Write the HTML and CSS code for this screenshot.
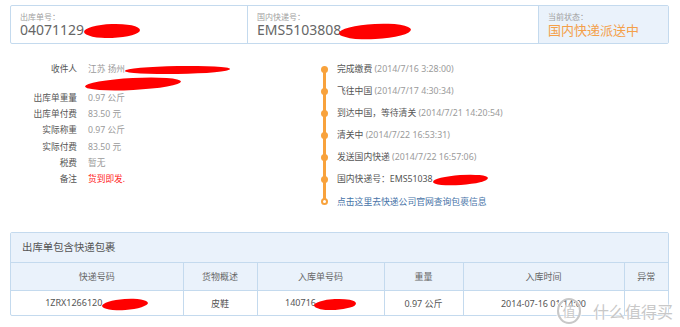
FILE: index.html
```html
<!DOCTYPE html>
<html lang="zh-CN">
<head>
    <meta charset="UTF-8">
    <title>出库单详情</title>
    <link rel="stylesheet" href="styles.css">
</head>
<body>
<div class="page">

    <!-- summary bar -->
    <div class="summary">
        <div class="cell cell-order">
            <div class="cell-label">出库单号：</div>
            <div class="cell-value">04071129<span class="scribble scribble-order"></span></div>
        </div>
        <div class="cell cell-express">
            <div class="cell-label">国内快递号：</div>
            <div class="cell-value">EMS5103808<span class="scribble scribble-ems"></span></div>
        </div>
        <div class="cell cell-status">
            <div class="cell-label">当前状态：</div>
            <div class="cell-value status">国内快递派送中</div>
        </div>
    </div>

    <!-- details -->
    <div class="details">
        <dl class="info">
            <div class="info-row info-row-address">
                <dt>收件人</dt>
                <dd>江苏 扬州<span class="scribble scribble-addr1"></span><br><span class="scribble scribble-addr2"></span></dd>
            </div>
            <div class="info-row"><dt>出库单重量</dt><dd>0.97 公斤</dd></div>
            <div class="info-row"><dt>出库单付费</dt><dd>83.50 元</dd></div>
            <div class="info-row"><dt>实际称重</dt><dd>0.97 公斤</dd></div>
            <div class="info-row"><dt>实际付费</dt><dd>83.50 元</dd></div>
            <div class="info-row"><dt>税费</dt><dd>暂无</dd></div>
            <div class="info-row"><dt>备注</dt><dd class="remark">货到即发.</dd></div>
        </dl>

        <ul class="timeline">
            <li>完成缴费 <span class="time">(2014/7/16 3:28:00)</span></li>
            <li>飞往中国 <span class="time">(2014/7/17 4:30:34)</span></li>
            <li>到达中国，等待清关 <span class="time">(2014/7/21 14:20:54)</span></li>
            <li>清关中 <span class="time">(2014/7/22 16:53:31)</span></li>
            <li>发送国内快递 <span class="time">(2014/7/22 16:57:06)</span></li>
            <li>国内快递号：EMS51038<span class="scribble scribble-track"></span></li>
            <li class="last"><a href="#">点击这里去快递公司官网查询包裹信息</a></li>
        </ul>
    </div>

    <!-- parcels -->
    <div class="parcels">
        <div class="parcels-title">出库单包含快递包裹</div>
        <table>
            <colgroup>
                <col style="width:172px">
                <col style="width:74px">
                <col style="width:127px">
                <col style="width:79px">
                <col style="width:161px">
                <col style="width:44px">
            </colgroup>
            <tr>
                <th>快递号码</th>
                <th>货物概述</th>
                <th>入库单号码</th>
                <th>重量</th>
                <th>入库时间</th>
                <th>异常</th>
            </tr>
            <tr>
                <td>1ZRX1266120<span class="scribble scribble-ups"></span></td>
                <td>皮鞋</td>
                <td>140716<span class="scribble scribble-in"></span></td>
                <td>0.97 公斤</td>
                <td>2014-07-16 01:14:00</td>
                <td></td>
            </tr>
        </table>
    </div>

    <div class="watermark">
        <span class="watermark-logo">值</span>
        <span class="watermark-text">什么值得买</span>
    </div>
</div>
</body>
</html>
```

FILE: styles.css
```css
body {
    margin: 0;
    font-family: "Noto Sans", "Noto Sans CJK SC", sans-serif;
    background-color: #fff;
    color: #666;
}
.page {
    position: relative;
    width: 680px;
    height: 327px;
    padding: 5px 11px 0 10px;
    box-sizing: border-box;
    overflow: hidden;
}

/* summary bar */
.summary {
    display: flex;
    height: 39px;
    border: 1px solid #c4daee;
    border-radius: 2px;
    box-sizing: border-box;
}
.cell {
    padding: 7px 9px 0;
    box-sizing: border-box;
    white-space: nowrap;
}
.cell + .cell {
    border-left: 1px solid #c4daee;
}
.cell-order {
    width: 236px;
}
.cell-express {
    width: 291px;
}
.cell-status {
    flex: 1;
    background-color: #eaf2fb;
}
.cell-label {
    font-size: 8px;
    line-height: 8px;
    color: #a0a0a0;
}
.cell-value {
    margin-top: 3px;
    font-size: 14px;
    line-height: 12px;
    color: #666;
}
.status {
    font-size: 13px;
    color: #f4a04a;
}

/* redaction marks */
.scribble {
    display: inline-block;
    background-color: #f00;
    border-radius: 50%;
    vertical-align: middle;
}
.scribble-order {
    width: 56px;
    height: 14px;
    transform: rotate(-2deg);
}
.scribble-ems {
    width: 72px;
    height: 15px;
    margin-left: -2px;
    transform: rotate(-3deg);
}
.scribble-addr1 {
    width: 105px;
    height: 8px;
    transform: rotate(-1deg);
}
.scribble-addr2 {
    width: 96px;
    height: 12px;
    margin-left: -3px;
    transform: rotate(-3deg);
}
.scribble-track {
    width: 55px;
    height: 10px;
    transform: rotate(-4deg);
}
.scribble-ups {
    width: 46px;
    height: 11px;
    transform: rotate(-4deg);
}
.scribble-in {
    width: 42px;
    height: 11px;
    margin-left: -2px;
    transform: rotate(-3deg);
}

/* details */
.details {
    display: flex;
    height: 155px;
    margin-top: 14px;
}
.info {
    width: 308px;
    margin: 0;
    padding-top: 4px;
    font-size: 8.7px;
}
.info-row {
    display: grid;
    grid-template-columns: 67px 1fr;
    column-gap: 11px;
    line-height: 16.2px;
}
.info-row-address {
    line-height: 14px;
}
.info dt {
    text-align: right;
    color: #555;
}
.info dd {
    margin: 0;
    color: #9a9a9a;
    white-space: nowrap;
}
.info .remark {
    color: #f22;
}

.timeline {
    position: relative;
    list-style: none;
    margin: 0;
    padding: 0 0 0 19px;
    font-size: 8.8px;
}
.timeline::before {
    content: "";
    position: absolute;
    left: 5px;
    top: 11px;
    bottom: 11px;
    width: 3px;
    background-color: #f8a23c;
}
.timeline li {
    position: relative;
    height: 22.1px;
    line-height: 22.1px;
    color: #555;
    white-space: nowrap;
}
.timeline li::before {
    content: "";
    position: absolute;
    left: -16px;
    top: 7.5px;
    width: 7px;
    height: 7px;
    border-radius: 50%;
    background-color: #f8a23c;
    box-sizing: border-box;
}
.timeline li.last::before {
    background-color: #fff;
    border: 2px solid #f8a23c;
}
.timeline .time {
    color: #9a9a9a;
}
.timeline a {
    color: #4773a8;
    text-decoration: none;
}

/* parcels table */
.parcels {
    margin-top: 19px;
    border: 1px solid #c4daee;
    border-radius: 2px;
}
.parcels-title {
    height: 29px;
    line-height: 29px;
    padding-left: 11px;
    font-size: 10.4px;
    color: #555;
    background-color: #eaf2fb;
}
.parcels table {
    width: 100%;
    table-layout: fixed;
    border-collapse: collapse;
}
.parcels th,
.parcels td {
    padding: 0;
    border: 1px solid #c4daee;
    text-align: center;
    font-size: 9px;
    white-space: nowrap;
    overflow: hidden;
}
.parcels th {
    height: 27px;
    font-weight: normal;
    color: #666;
    background-color: #eaf2fb;
}
.parcels td {
    height: 24px;
    color: #555;
}
.parcels th:first-child,
.parcels td:first-child {
    border-left: none;
}
.parcels th:last-child,
.parcels td:last-child {
    border-right: none;
}
.parcels tr:last-child td {
    border-bottom: none;
}

/* site watermark */
.watermark {
    position: absolute;
    left: 557px;
    top: 298px;
    display: flex;
    align-items: center;
    gap: 12px;
    color: #c8c8c8;
    text-shadow: 0 0 2px #fff, 0 0 2px #fff;
}
.watermark-logo {
    width: 20px;
    height: 22px;
    border: 2px solid #c8c8c8;
    border-radius: 50%;
    font-size: 13px;
    line-height: 22px;
    text-align: center;
    box-shadow: 0 0 0 1px #fff;
}
.watermark-text {
    font-size: 16px;
    letter-spacing: 0;
}
```
